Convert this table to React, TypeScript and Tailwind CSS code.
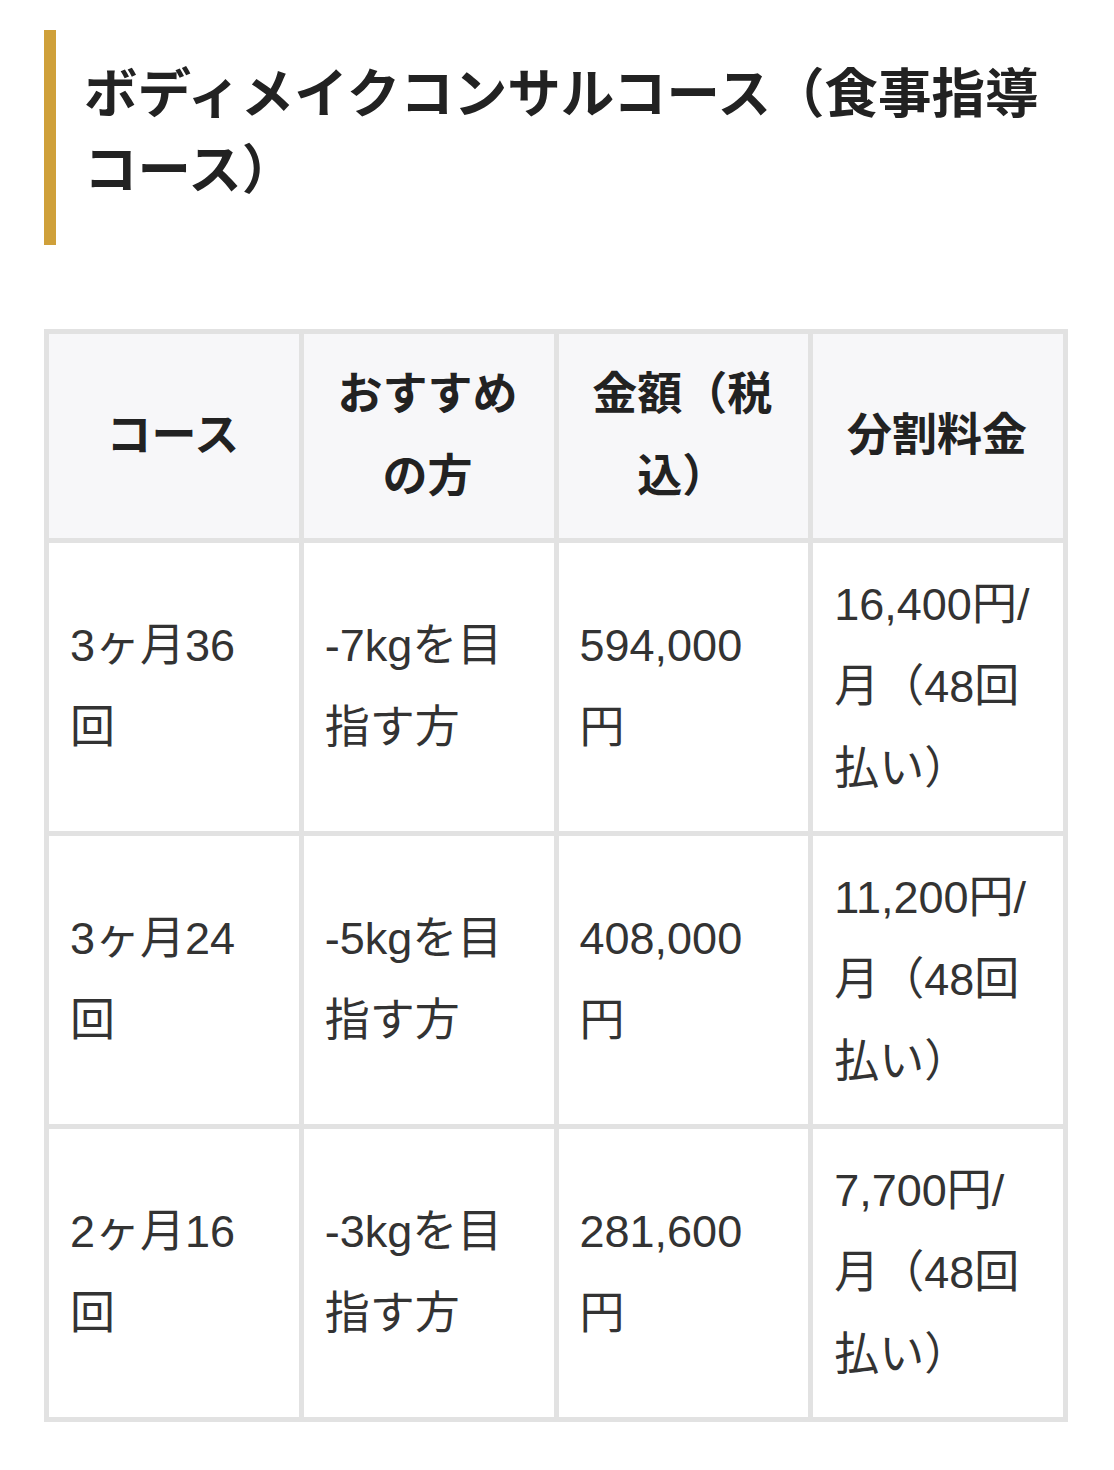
import React from 'react';

const rows = [
  { course: '3ヶ月36回', target: '-7kgを目指す方', price: '594,000円', split: '16,400円/月（48回払い）' },
  { course: '3ヶ月24回', target: '-5kgを目指す方', price: '408,000円', split: '11,200円/月（48回払い）' },
  { course: '2ヶ月16回', target: '-3kgを目指す方', price: '281,600円', split: '7,700円/月（48回払い）' },
];

const heads = ['コース', 'おすすめの方', '金額（税込）', '分割料金'];

export default function App() {
  return (
    <div
      className="min-h-[1470px] w-[1114px] bg-white pt-[30px]"
      style={{ fontFamily: '"Liberation Sans", "Noto Sans CJK JP", sans-serif' }}
    >
      <div className="mx-[44px] border-l-[12px] border-[#cfa03a] pl-[28px] pt-[27px] pb-[36px]">
        <h2 className="text-[53.5px] font-bold leading-[76px] text-[#222]">
          ボディメイクコンサルコース（食事指導コース）
        </h2>
      </div>

      <div className="mx-[44px] mt-[84px]">
        <table className="w-[1024px] table-fixed border-collapse border-[5px] border-[#e2e2e2] text-[45px] text-[#333]">
          <thead>
            <tr className="bg-[#f7f7f9]">
              {heads.map((h) => (
                <th
                  key={h}
                  className="border-[5px] border-[#e2e2e2] pl-[21px] pr-[23px] py-[20px] text-center align-middle font-bold leading-[82px] text-[#222]"
                >
                  {h}
                </th>
              ))}
            </tr>
          </thead>
          <tbody>
            {rows.map((r) => (
              <tr key={r.course}>
                {[r.course, r.target, r.price, r.split].map((c, i) => (
                  <td
                    key={i}
                    className="border-[5px] border-[#e2e2e2] pl-[21px] pr-[25px] py-[21px] text-left align-middle leading-[82px]"
                  >
                    {c}
                  </td>
                ))}
              </tr>
            ))}
          </tbody>
        </table>
      </div>
    </div>
  );
}
